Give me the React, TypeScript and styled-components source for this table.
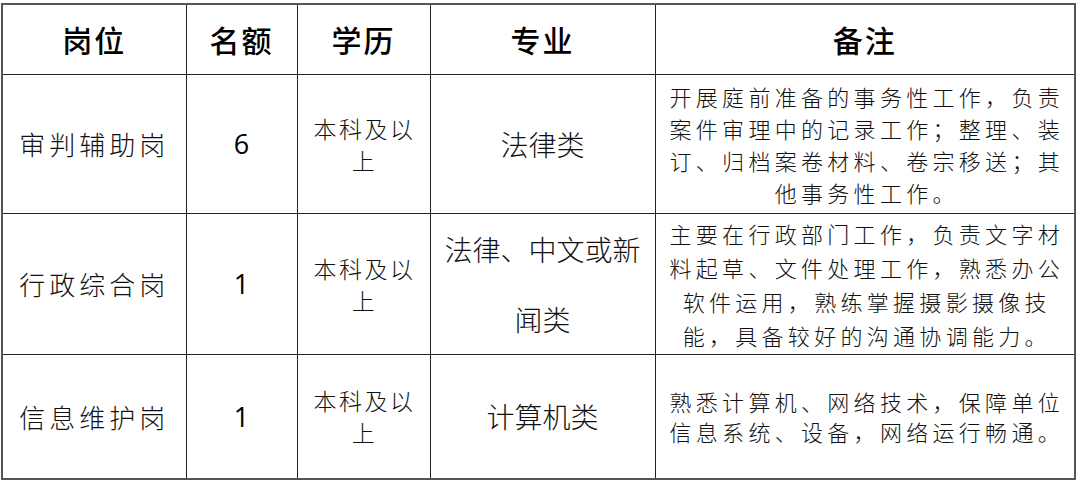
import styled, { createGlobalStyle } from "styled-components"

const GlobalStyle = createGlobalStyle`
    html, body {
        margin: 0;
        padding: 0;
        background: #fff;
    }
    body {
        font-family: "Noto Sans CJK SC", "Noto Sans", sans-serif;
        color: #111;
    }
`

const rows = [
    {
        post: "审判辅助岗",
        count: "6",
        major: ["法律类"],
        note: ["开展庭前准备的事务性工作，负责", "案件审理中的记录工作；整理、装", "订、归档案卷材料、卷宗移送；其", "他事务性工作。"],
        height: 139,
        noteLine: 32,
    },
    {
        post: "行政综合岗",
        count: "1",
        major: ["法律、中文或新", "闻类"],
        note: ["主要在行政部门工作，负责文字材", "料起草、文件处理工作，熟悉办公", "软件运用，熟练掌握摄影摄像技", "能，具备较好的沟通协调能力。"],
        height: 140,
        noteLine: 34,
    },
    {
        post: "信息维护岗",
        count: "1",
        major: ["计算机类"],
        note: ["熟悉计算机、网络技术，保障单位", "信息系统、设备，网络运行畅通。"],
        height: 125,
        noteLine: 30,
    },
]

const App = () => {
    return (
        <Page>
            <GlobalStyle />
            <Table>
                <colgroup>
                    <col style={{ width: 184 }} />
                    <col style={{ width: 111 }} />
                    <col style={{ width: 133 }} />
                    <col style={{ width: 225 }} />
                    <col style={{ width: 420 }} />
                </colgroup>
                <thead>
                    <HeadRow>
                        <HeadCell>岗位</HeadCell>
                        <HeadCell>名额</HeadCell>
                        <HeadCell>学历</HeadCell>
                        <HeadCell>专业</HeadCell>
                        <HeadCell>备注</HeadCell>
                    </HeadRow>
                </thead>
                <tbody>
                    {rows.map((r) => (
                        <BodyRow key={r.post} $h={r.height}>
                            <PostCell>{r.post}</PostCell>
                            <CountCell>{r.count}</CountCell>
                            <DegreeCell>
                                <Line>本科及以</Line>
                                <Line>上</Line>
                            </DegreeCell>
                            <MajorCell>
                                {r.major.map((m) => (
                                    <Line key={m}>{m}</Line>
                                ))}
                            </MajorCell>
                            <NoteCell $lh={r.noteLine}>
                                {r.note.map((n) => (
                                    <Line key={n}>{n}</Line>
                                ))}
                            </NoteCell>
                        </BodyRow>
                    ))}
                </tbody>
            </Table>
        </Page>
    )
}

const Page = styled.div`
    padding: 3px 0 0 1px;
`

const Table = styled.table`
    border-collapse: collapse;
    table-layout: fixed;
    width: 1073px;
    border: 2px solid #555;
`

const Cell = styled.td`
    border: 1px solid #222;
    padding: 0;
    text-align: center;
    vertical-align: middle;
`

const HeadRow = styled.tr`
    height: 70px;
`

const HeadCell = styled(Cell).attrs({ as: "th" })`
    font-size: 30px;
    font-weight: 500;
    letter-spacing: 2px;
    color: #000;
`

const BodyRow = styled.tr<{ $h: number }>`
    height: ${(p) => p.$h}px;
`

const PostCell = styled(Cell)`
    font-size: 26px;
    font-weight: 300;
    letter-spacing: 4px;
`

const CountCell = styled(Cell)`
    font-family: "Open Sans", "Noto Sans", sans-serif;
    font-size: 27px;
    color: #000;
`

const DegreeCell = styled(Cell)`
    font-size: 23px;
    font-weight: 300;
    letter-spacing: 2.5px;
    line-height: 32px;
    padding-left: 2px;
`

const MajorCell = styled(Cell)`
    font-size: 28px;
    font-weight: 300;
    line-height: 70px;
`

const NoteCell = styled(Cell)<{ $lh: number }>`
    font-size: 22px;
    font-weight: 300;
    letter-spacing: 4.3px;
    line-height: ${(p) => p.$lh}px;
    padding-left: 4px;
`

const Line = styled.span`
    display: block;
    white-space: nowrap;
`

export default App
